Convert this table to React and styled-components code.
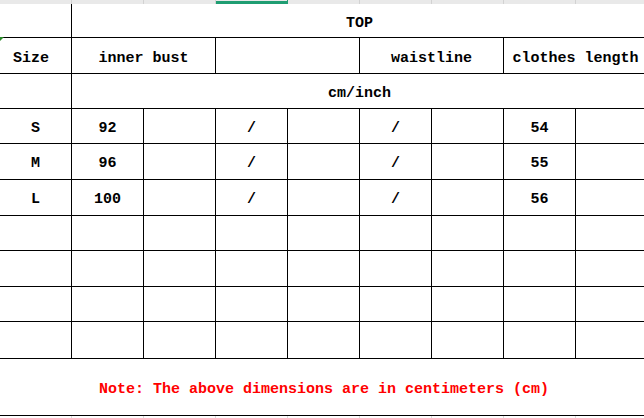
import React from "react";
import styled, { createGlobalStyle, css } from "styled-components";

const Global = createGlobalStyle`
  html, body { margin: 0; padding: 0; background: #fff; overflow: hidden; }
  #root { width: 644px; height: 418px; overflow: hidden; }
`;

const Sheet = styled.div`
  display: grid;
  grid-template-columns: repeat(9, 72px);
  grid-template-rows: 4px 34px 36px 35px 35px 36px 36px 35px 36px 35px 37px 57px 20px;
  width: 648px;
  font-family: "Liberation Mono", "Courier New", monospace;
  font-size: 15px;
  font-weight: bold;
  color: #000;
`;

const HeadCell = styled.div`
  box-sizing: border-box;
  border-right: 1px solid #d2d2d2;
  background: #e9e9e9;
  ${(p) =>
    p.$active &&
    css`
      background: linear-gradient(#e9e9e9 0 1px, #1f9d72 1px);
      border-right-color: #1f9d72;
    `}
`;

const Cell = styled.div`
  box-sizing: border-box;
  grid-column: span ${(p) => p.$span || 1};
  border-right: ${(p) => (p.$noRight ? "none" : "1px solid #000")};
  border-bottom: 1px solid #000;
  display: flex;
  align-items: center;
  justify-content: center;
  padding-top: ${(p) => p.$drop || 4}px;
  white-space: pre;
  position: relative;
  color: ${(p) => p.$color || "#000"};
  ${(p) =>
    p.$marker &&
    css`
      &::before {
        content: "";
        position: absolute;
        left: 0;
        top: -1px;
        border-top: 4px solid #2a8a2a;
        border-right: 4px solid transparent;
      }
    `}
`;

const GhostCell = styled.div`
  box-sizing: border-box;
  border-right: 1px solid #dcdcdc;
`;

const dataRows = [
  ["S", "92", "", "/", "", "/", "", "54", ""],
  ["M", "96", "", "/", "", "/", "", "55", ""],
  ["L", "100", "", "/", "", "/", "", "56", ""],
  ["", "", "", "", "", "", "", "", ""],
  ["", "", "", "", "", "", "", "", ""],
  ["", "", "", "", "", "", "", "", ""],
  ["", "", "", "", "", "", "", "", ""],
];

export default function App() {
  return (
    <>
      <Global />
      <Sheet>
        {Array.from({ length: 9 }, (_, i) => (
          <HeadCell key={"h" + i} $active={i === 3} />
        ))}

        <Cell />
        <Cell $span={8} $drop={6}>TOP</Cell>

        <Cell $marker $drop={6}>{"Size "}</Cell>
        <Cell $span={2} $drop={6}>inner bust</Cell>
        <Cell $span={2} />
        <Cell $span={2} $drop={6}>waistline</Cell>
        <Cell $span={2} $drop={6}>clothes length</Cell>

        <Cell />
        <Cell $span={8}>cm/inch</Cell>

        {dataRows.map((row, r) =>
          row.map((v, c) => <Cell key={r + "-" + c}>{v}</Cell>)
        )}

        <Cell $span={9} $noRight $color="#ff0000">
          Note: The above dimensions are in centimeters (cm)
        </Cell>

        {Array.from({ length: 9 }, (_, i) => (
          <GhostCell key={"g" + i} />
        ))}
      </Sheet>
    </>
  );
}
